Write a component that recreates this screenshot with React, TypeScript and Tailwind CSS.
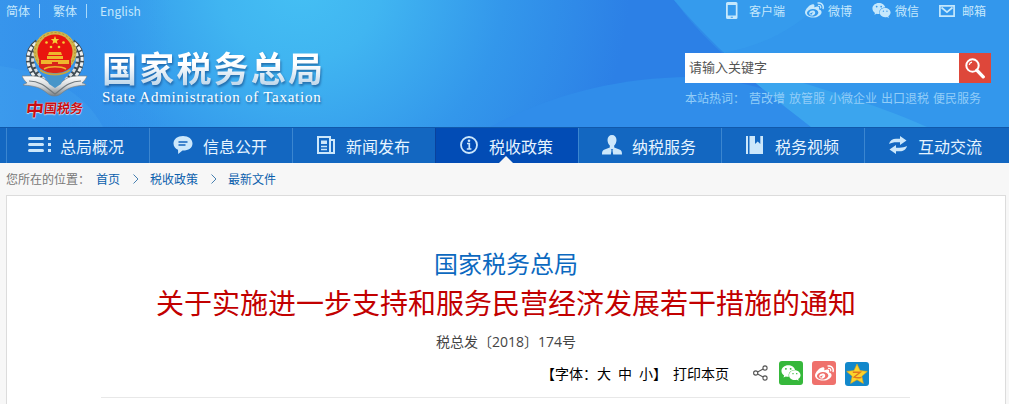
import type { ReactNode } from 'react';
import { FaWeibo, FaWeixin } from 'react-icons/fa';

type NavItem = { label: string; icon: ReactNode; active?: boolean };

const hotWords = ['营改增', '放管服', '小微企业', '出口退税', '便民服务'];
const crumbs = ['首页', '税收政策', '最新文件'];

const navItems: NavItem[] = [
  {
    label: '总局概况',
    icon: (
      <svg width="24" height="18" viewBox="0 0 24 18" fill="currentColor">
        <rect x="0" y="1" width="16" height="3" rx="1.5" />
        <rect x="0" y="7" width="16" height="3" rx="1.5" />
        <rect x="0" y="13" width="16" height="3" rx="1.5" />
        <rect x="20" y="1" width="3" height="3" />
        <rect x="20" y="7" width="3" height="3" />
        <rect x="20" y="13" width="3" height="3" />
      </svg>
    ),
  },
  {
    label: '信息公开',
    icon: (
      <svg width="20" height="20" viewBox="0 0 20 20" fill="currentColor">
        <path d="M10 1C4.500 1 .5 4 .5 8.500c0 3 1.800 5.200 4.500 6.300L5.200 19l4.300-3.500H10c5.500 0 9.500-2.500 9.500-7S15.500 1 10 1z" />
        <path d="M5.500 7h9M5.500 10h7" stroke="#1565bf" strokeWidth="1.400" />
      </svg>
    ),
  },
  {
    label: '新闻发布',
    icon: (
      <svg width="18" height="18" viewBox="0 0 18 18" fill="none" stroke="currentColor" strokeWidth="2">
        <path d="M1 1h12v16H1zM13 4h4v13h-4" />
        <path d="M4 4.500h6V8H4z" fill="currentColor" strokeWidth="0" />
        <path d="M4 10.500h6M4 13.500h6" strokeWidth="1.300" />
      </svg>
    ),
  },
  {
    label: '税收政策',
    active: true,
    icon: (
      <svg width="18" height="18" viewBox="0 0 18 18" fill="none" stroke="currentColor">
        <circle cx="9" cy="9" r="8" strokeWidth="1.800" />
        <path d="M7 7.500h2.300V13M6.800 13h4.600" strokeWidth="1.700" />
        <circle cx="9" cy="4.700" r="1.300" fill="currentColor" stroke="none" />
      </svg>
    ),
  },
  {
    label: '纳税服务',
    icon: (
      <svg width="22" height="20" viewBox="0 0 22 20" fill="currentColor">
        <path d="M11 0C8.300 0 6.500 2 6.500 5c0 2.200 1 4.300 2.300 5.600v1.900L3 14.800C1.300 15.500 1 17 1 19.500h8.800l.7-4-.8-1.300h2.600l-.8 1.300.7 4H21c0-2.500-.3-4-2-4.700l-5.800-2.300v-1.900C14.500 9.300 15.500 7.200 15.500 5c0-3-1.800-5-4.500-5z" />
      </svg>
    ),
  },
  {
    label: '税务视频',
    icon: (
      <svg width="18" height="18" viewBox="0 0 18 18" fill="currentColor">
        <path d="M0 0h2v18H0zM3.500 0H9v8l2.700-2.500L14.300 8V0H17v18H3.500z" />
      </svg>
    ),
  },
  {
    label: '互动交流',
    icon: (
      <svg width="18" height="18" viewBox="0 0 18 18" fill="currentColor">
        <path d="M0 8C.8 4.500 3.700 2.700 7 2.700h4V0l6.500 4.600L11 9V6.300H7.500C4.500 6.300 2.500 6.800 0 8z" />
        <path d="M18 10c-.8 3.500-3.700 5.300-7 5.300H7V18L.5 13.400 7 9v2.700h3.500c3 0 5-.5 7.500-1.700z" />
      </svg>
    ),
  },
];

function HeaderBackdrop() {
  return (
    <svg
      className="absolute inset-0 -z-10"
      width="1009"
      height="127"
      viewBox="0 0 1009 127"
      preserveAspectRatio="none"
      aria-hidden="true"
    >
      <defs>
        <radialGradient id="sky" gradientUnits="userSpaceOnUse" cx="300" cy="-20" r="330">
          <stop offset="0" stopColor="#45c0f4" />
          <stop offset="0.25" stopColor="#40b5f1" />
          <stop offset="0.62" stopColor="#3397eb" />
          <stop offset="1" stopColor="#2c80e6" />
        </radialGradient>
        <linearGradient id="west" x1="0" x2="1" y1="0" y2="0">
          <stop offset="0" stopColor="#3795ec" />
          <stop offset="1" stopColor="#3795ec" stopOpacity="0" />
        </linearGradient>
      </defs>
      <rect width="1009" height="127" fill="url(#sky)" />
      <rect width="170" height="127" fill="url(#west)" />
      <path d="M0 66C45 72 85 92 103 127H0z" fill="#45a7ef" fillOpacity="0.3" />
      <path d="M490 127C550 95 615 78 690 77c60 3 110 20 150 50z" fill="#308dea" />
      <path d="M674 0h335v127H811C775 98 715 50 674 0z" fill="#3397ec" />
      <path d="M722 53c50 25 130 40 205 74H811C780 103 750 80 722 53z" fill="#3ba5ee" />
      <path d="M674 0h150c-30 30-60 45-102 53C705 38 688 19 674 0z" fill="#3da5ee" fillOpacity="0.3" />
    </svg>
  );
}

function Emblem() {
  return (
    <svg width="66" height="68" viewBox="0 0 66 68" aria-hidden="true">
      <defs>
        <linearGradient id="silver" x1="0" x2="0" y1="0" y2="1">
          <stop offset="0" stopColor="#fff" />
          <stop offset="0.5" stopColor="#d5d8da" />
          <stop offset="1" stopColor="#777e83" />
        </linearGradient>
      </defs>
      {/* wheat ears */}
      <path d="M16 13C4 22 5 40 21 52M50 13C62 22 61 40 45 52" fill="none" stroke="#3f4a52" strokeWidth="8" />
      <path
        d="M14 13C2 22 3 40 19 53M52 13C64 22 63 40 47 53"
        fill="none"
        stroke="#eef1f2"
        strokeWidth="3"
        strokeDasharray="4 1.500"
      />
      <path
        d="M18 14C7 23 8 39 23 50M48 14C59 23 58 39 43 50"
        fill="none"
        stroke="#d5dadd"
        strokeWidth="3"
        strokeDasharray="3.500 2"
      />
      {/* open book */}
      <path
        d="M1 46c11 0 17-1 24 5l8 6 8-6c7-6 13-5 24-5-1 3-3 5-5 7 2 0 3 1 4 2-13 1-18 3-24 8-4 4-11 4-15 0-6-5-11-7-24-8 1-1 3-2 4-2-2-2-4-4-5-7z"
        fill="url(#silver)"
        stroke="#777f84"
        strokeWidth="0.7"
      />
      <path d="M7 51c12 0 18 7 26 13 8-6 14-13 26-13" fill="none" stroke="#6f787d" strokeWidth="1.200" />
      <path d="M24 46h18l-3 8-6 4-6-4z" fill="#4795c9" />
      <ellipse cx="33" cy="22" rx="21.500" ry="21" fill="#d2b64a" />
      <ellipse cx="33" cy="22" rx="20" ry="19.500" fill="none" stroke="#a78c38" strokeDasharray="2 2" />
      <ellipse cx="33" cy="22" rx="17.500" ry="17.500" fill="#e9150f" />
      <path d="M17 30h32v7c-5 5-11 6-16 6s-11-1-16-6z" fill="#d9251a" />
      <path
        d="m33 6 1.200 2.900 3 .2-2.300 2 .7 3-2.600-1.600-2.600 1.600.7-3-2.300-2 3-.2z"
        fill="#f5cf35"
      />
      <g fill="#f5cf35">
        <circle cx="24.500" cy="12.500" r="1.300" />
        <circle cx="41.500" cy="12.500" r="1.300" />
        <circle cx="29" cy="17" r="1.300" />
        <circle cx="37" cy="17" r="1.300" />
      </g>
      <path d="M27 22h12l1 3H26zM25 26h16v3H25zM19 30h28v4H36v-2h-6v2H19z" fill="#efb52d" />
      <path d="M22 39c5-3 17-3 22 0" fill="none" stroke="#efb52d" strokeWidth="1.500" />
      <path d="M18 40c8 6 22 6 30 0" fill="none" stroke="#c5a43f" strokeWidth="2" />
    </svg>
  );
}

function TopBar() {
  return (
    <div className="flex h-[22px] items-center justify-between pb-px pl-[6px] pr-[23px] text-xs text-[#c5e8fc]">
      <div className="flex items-center">
        <span>简体</span>
        <span className="ml-[9px] h-3.5 w-px bg-[#a9d9fa]" />
        <span className="ml-[13px]">繁体</span>
        <span className="ml-[9px] h-3.5 w-px bg-[#a9d9fa]" />
        <span className="ml-[13px] text-[12px]">English</span>
      </div>
      <div className="flex items-center">
        <svg width="12" height="17" viewBox="0 0 12 17" fill="currentColor" aria-hidden="true">
          <path
            fillRule="evenodd"
            d="M1.500 0h8.500A1.500 1.500 0 0 1 11.500 1.500v14A1.500 1.500 0 0 1 10 17H1.500A1.500 1.500 0 0 1 0 15.500v-14A1.500 1.500 0 0 1 1.500 0zM1.800 3v10.500h8V3zM4.700 14.700v1h2.200v-1z"
          />
        </svg>
        <span className="ml-[11px]">客户端</span>
        <FaWeibo className="ml-5 size-[19px]" />
        <span className="ml-1">微博</span>
        <FaWeixin className="ml-5 size-[19px]" />
        <span className="ml-1">微信</span>
        <svg className="ml-5" width="16" height="12" viewBox="0 0 16 12" fill="none" stroke="currentColor" strokeWidth="1.700">
          <path d="M.9.900h14.200v10.200H.9z" />
          <path d="m2.500 2.500 5.500 4.700 5.500-4.700" />
        </svg>
        <span className="ml-[7px]">邮箱</span>
      </div>
    </div>
  );
}

function SearchBox() {
  return (
    <div className="mr-[18px] mt-[31px] w-[306px]">
      <div className="flex h-[30px]">
        <input
          type="text"
          placeholder="请输入关键字"
          className="w-[274px] bg-white px-1 pb-0.5 text-[13px] text-gray-700 outline-none placeholder:text-[#555]"
        />
        <button type="button" aria-label="搜索" className="flex w-8 items-center justify-center bg-[#de473a]">
          <svg width="20" height="21" viewBox="0 0 20 21" fill="none" stroke="#fff">
            <circle cx="7.500" cy="7.500" r="6.200" strokeWidth="2" />
            <path d="M4.200 7A3.500 3.500 0 0 1 7 4.200" strokeWidth="1.200" />
            <path d="m12 12.300 6.200 6.500" strokeWidth="3.400" strokeLinecap="round" />
          </svg>
        </button>
      </div>
      <div className="mt-[6px] flex gap-1 text-xs leading-[18px] text-[#92cdf8]">
        <span>本站热词：</span>
        {hotWords.map((word) => (
          <a key={word}>{word}</a>
        ))}
      </div>
    </div>
  );
}

function Header() {
  return (
    <header className="relative isolate h-[127px] overflow-hidden">
      <HeaderBackdrop />
      <TopBar />
      <div className="flex justify-between">
        <div className="flex">
          <div className="ml-[22px] mt-[8px] w-[66px]">
            <Emblem />
            <div className="ml-1 flex h-5 -skew-x-6 items-center font-bold leading-5 text-[#c90d12] [text-shadow:0_0_1px_#fff,0_1px_1px_#b8dcf5]">
              <span className="text-[18px]">中</span>
              <span className="text-[13px]">国</span>
              <span className="text-[13px]">税</span>
              <span className="text-[13px]">务</span>
            </div>
          </div>
          <div className="ml-[14px] mt-[24px]">
            <h1 className="bg-linear-to-b from-white from-45% to-[#b9d3e8] bg-clip-text text-[35px] font-bold leading-[41px] tracking-[2.200px] text-transparent drop-shadow-[1px_2px_1px_rgba(20,70,130,0.6)]">
              国家税务总局
            </h1>
            <p className="mt-px font-['Liberation_Serif',serif] text-[15px] leading-[18px] tracking-[0.740px] text-white [text-shadow:1px_2px_2px_rgba(20,70,130,0.6)]">
              State Administration of Taxation
            </p>
          </div>
        </div>
        <SearchBox />
      </div>
    </header>
  );
}

function MainNav() {
  return (
    <nav className="flex h-9 border-t border-[#1159ab] bg-[#1367c1] pl-[6px]">
      {navItems.map(({ label, icon, active }) => (
        <a
          key={label}
          className={`relative flex w-[143px] items-center border-l pl-[21px] text-base text-[#e6f4ff] ${
            active ? 'border-[#0a429c] bg-[#024cb5]' : 'border-[#3b86d0]'
          }`}
        >
          <span className="flex w-6 justify-center pb-px text-[#cce7fb]">{icon}</span>
          <span className="ml-2 whitespace-nowrap">{label}</span>
          {active && (
            <svg className="absolute bottom-0 left-[63px]" width="14" height="7" viewBox="0 0 14 7">
              <path d="M0 7 7 0l7 7z" fill="#f7f7f7" />
            </svg>
          )}
        </a>
      ))}
    </nav>
  );
}

function Breadcrumb() {
  return (
    <div className="flex h-8 items-center pb-px pl-[6px] text-xs text-[#0b60ad]">
      <span className="mr-[6px] text-[#777]">您所在的位置：</span>
      {crumbs.map((crumb, i) => (
        <span key={crumb} className="flex items-center">
          {i > 0 && (
            <svg className="ml-[13px] mr-[11px]" width="6" height="10" viewBox="0 0 6 10" fill="none" stroke="#4780b0">
              <path d="m.5.500 4.500 4.500L.5 9.500" />
            </svg>
          )}
          <a>{crumb}</a>
        </span>
      ))}
    </div>
  );
}

function ShareTools() {
  return (
    <div className="mr-[136px] mt-[9px] flex h-6 items-center justify-end text-sm text-black">
      <span className="flex pb-px">
        <span>【字体：</span>
        <a>大</a>
        <a className="ml-[7px]">中</a>
        <a className="ml-[7px]">小</a>
        <span>】</span>
      </span>
      <a className="ml-[6px] pb-px">打印本页</a>
      <svg className="ml-6" width="15" height="16" viewBox="0 0 15 16" fill="none" stroke="#555" strokeWidth="1.100">
        <circle cx="2.700" cy="8" r="2.100" />
        <circle cx="12" cy="3" r="2.100" />
        <circle cx="12" cy="13" r="2.100" />
        <path d="m4.600 7 5.500-3M4.600 9l5.500 3" />
      </svg>
      <a className="ml-[11px] flex size-6 items-center justify-center rounded-[3px] bg-[#36b83b] text-white">
        <FaWeixin className="size-5" />
      </a>
      <a className="ml-[9px] flex size-6 items-center justify-center rounded-[3px] bg-[#ef716c] text-white">
        <FaWeibo className="size-[19px]" />
      </a>
      <a className="ml-[9px] mt-0.5 flex size-6 items-center justify-center rounded-[3px] bg-[#1288cb]">
        <svg width="22" height="22" viewBox="0 0 22 22">
          <path
            d="m11 1 3 6.600 7.300.8-5.500 4.800 1.600 7.200L11 16.800l-6.400 3.600 1.600-7.200L.7 8.400 8 7.600z"
            fill="#fcd32c"
            stroke="#eaa713"
            strokeWidth="0.600"
          />
          <path d="M6.800 9.200h7.500L8 14.200c3 .9 5 .8 7.500.1" fill="none" stroke="#e0781e" strokeWidth="1.400" />
        </svg>
      </a>
    </div>
  );
}

function Article() {
  return (
    <main className="ml-[6px] h-[209px] w-[1000px] border border-b-0 border-[#dcdcdc] bg-white pt-[49px] text-center">
      <div className="text-2xl leading-9 text-[#0c69c0]">国家税务总局</div>
      <h2 className="text-[28px] leading-[42px] text-[#c20000]">
        关于实施进一步支持和服务民营经济发展若干措施的通知
      </h2>
      <div className="mt-[9px] font-['Open_Sans','Noto_Sans_CJK_SC',sans-serif] text-sm leading-5 text-[#444]">
        税总发〔2018〕174号
      </div>
      <ShareTools />
      <div className="ml-[94px] mr-[95px] mt-3 h-px bg-[#e8e8e8]" />
    </main>
  );
}

export default function App() {
  return (
    <div className="h-[404px] w-[1009px] overflow-hidden bg-[#f7f7f7] font-['Noto_Sans_CJK_SC',sans-serif]">
      <Header />
      <MainNav />
      <Breadcrumb />
      <Article />
    </div>
  );
}
